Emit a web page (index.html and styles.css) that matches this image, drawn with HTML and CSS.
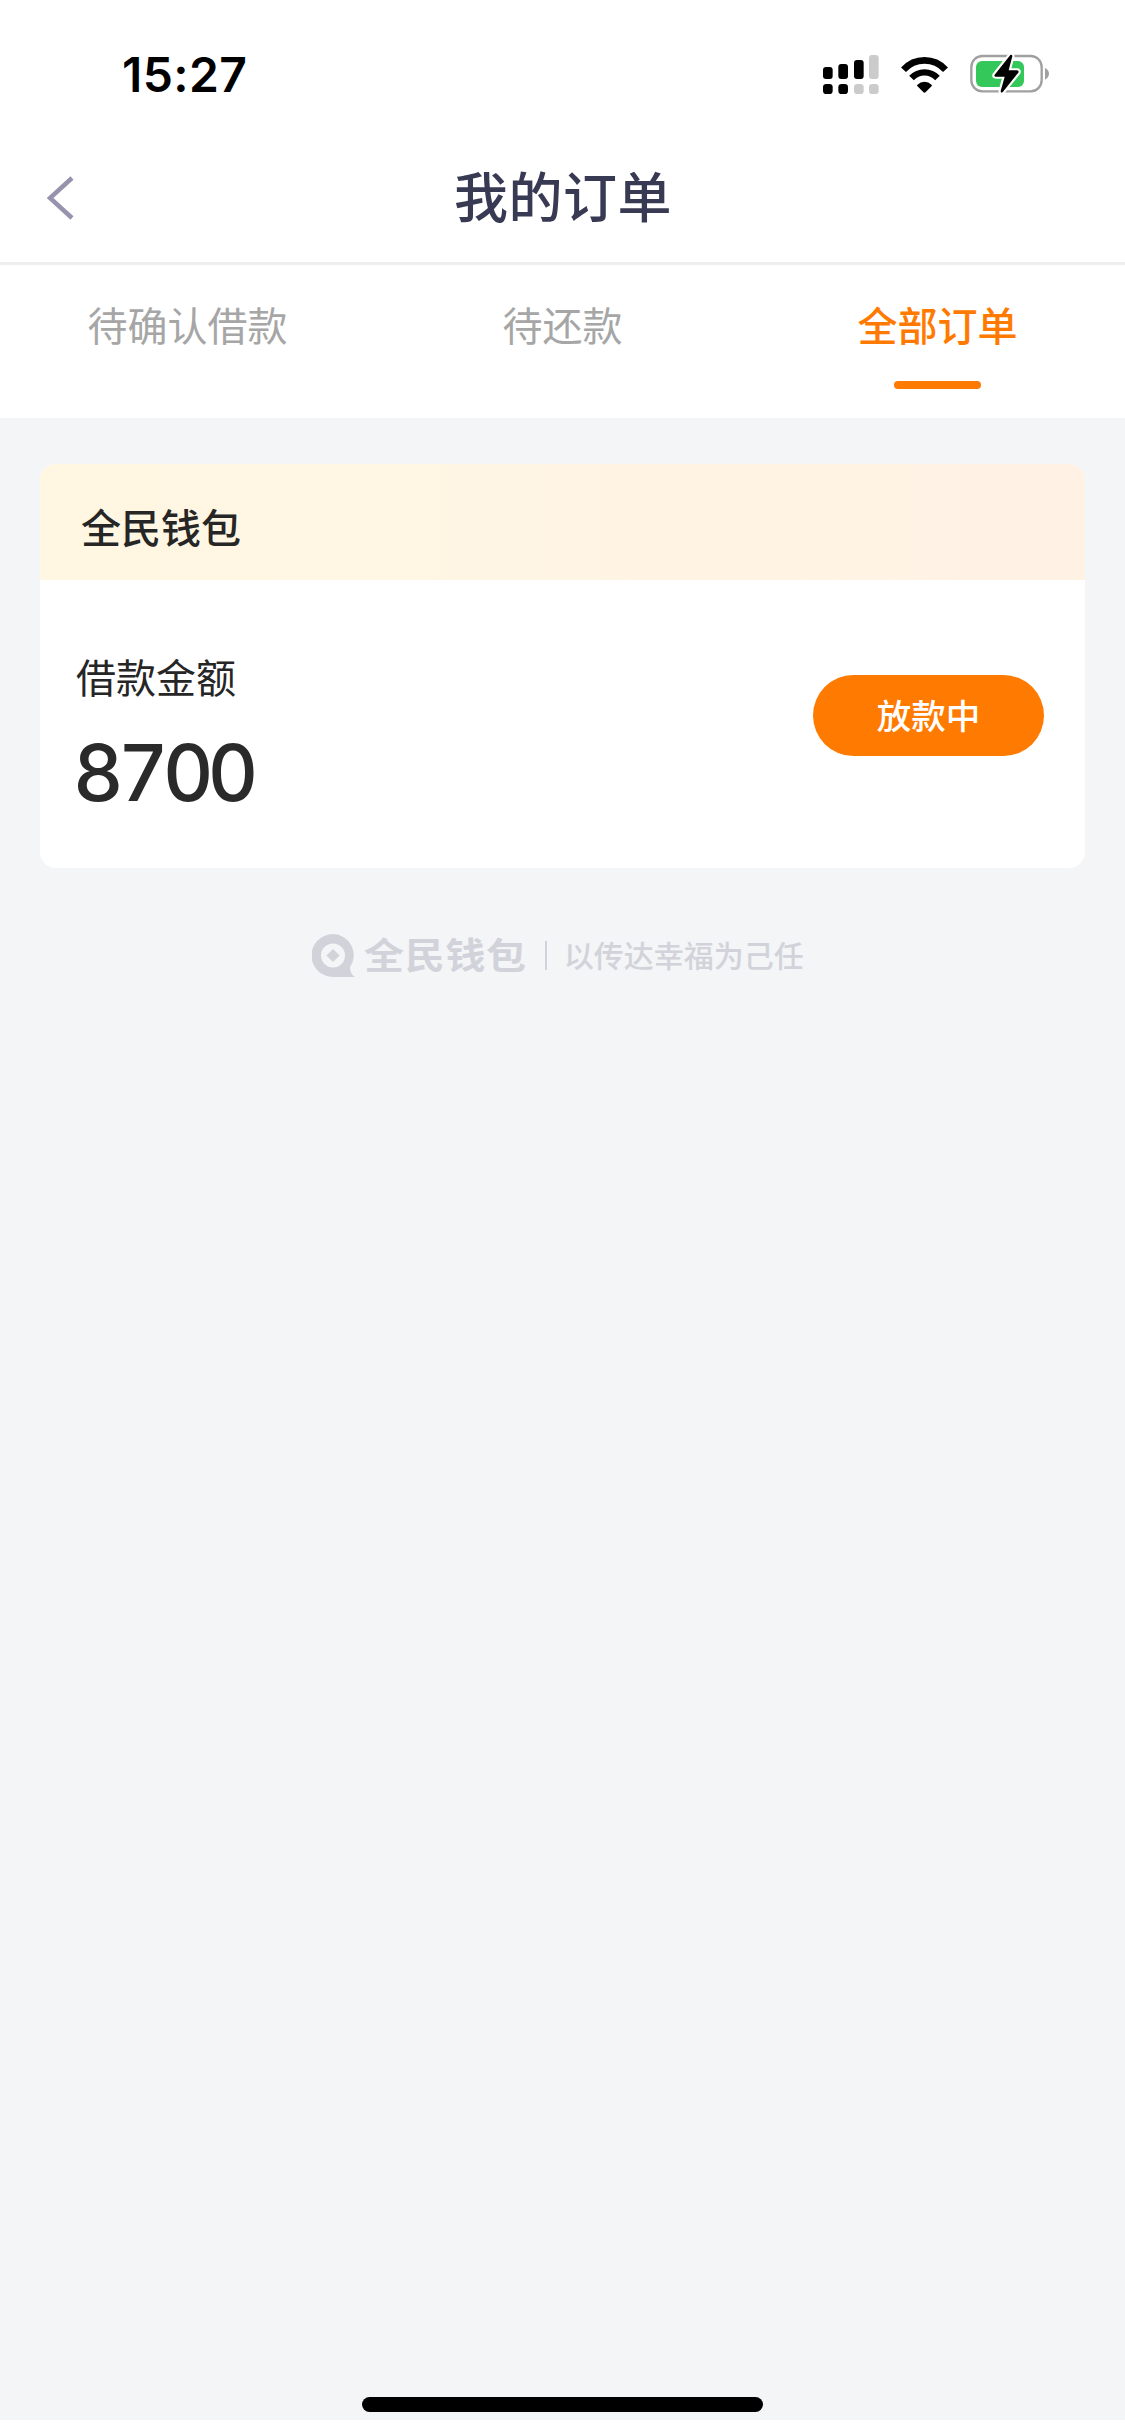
FILE: index.html
```html
<!DOCTYPE html>
<html lang="zh-CN">
<head>
    <meta charset="UTF-8">
    <meta name="viewport" content="width=device-width, initial-scale=1.0">
    <title>我的订单</title>
    <link rel="stylesheet" href="styles.css">
</head>
<body>
<div class="status-bar">
    <span class="time">15:27</span>
    <div class="status-icons">
        <svg class="signal" viewBox="0 0 168 117">
            <rect x="0" y="36" width="29" height="36" rx="9"/>
            <rect x="46" y="27" width="29" height="45" rx="9"/>
            <rect x="93" y="15" width="29" height="57" rx="9"/>
            <rect class="off" x="138" y="0" width="29" height="72" rx="9"/>
            <rect x="0" y="87" width="29" height="30" rx="10"/>
            <rect x="46" y="87" width="29" height="30" rx="10"/>
            <rect class="off" x="93" y="87" width="29" height="30" rx="10"/>
            <rect class="off" x="138" y="87" width="29" height="30" rx="10"/>
        </svg>
        <svg class="wifi" viewBox="0 0 146 108">
            <path d="M10 38Q36 10 73 10T136 38" fill="none" stroke="#000" stroke-width="20"/>
            <path d="M34 63Q50 46 73 46T112 63" fill="none" stroke="#000" stroke-width="19"/>
            <path d="M51 84Q61 74 73 74T95 84Q96 86 94 88L76 106Q73 108 70 106L52 88Q50 86 51 84Z"/>
        </svg>
        <svg class="battery" viewBox="0 0 240 120">
            <rect x="4" y="6" width="211" height="106" rx="33" fill="#fff" stroke="#a0a0a0" stroke-width="7"/>
            <rect x="18" y="21" width="144" height="78" rx="18" fill="#34c759"/>
            <path d="M225 42Q237 48 237 59T225 77Z" fill="#a0a0a0"/>
            <path d="M121 3L74 62Q71 68 78 68H104L92 111Q92 119 99 113L145 56Q148 50 141 49H116L127 7Q127 0 121 3Z" stroke="#fff" stroke-width="13" paint-order="stroke"/>
        </svg>
    </div>
</div>
<header>
    <svg class="back" viewBox="0 0 28 44">
        <path d="M25 2L3 22L25 42" fill="none" stroke="#9793ad" stroke-width="4.5"/>
    </svg>
    <h1>我的订单</h1>
</header>
<nav class="tabs">
    <div class="tab">待确认借款</div>
    <div class="tab">待还款</div>
    <div class="tab active">全部订单</div>
</nav>
<main>
    <div class="card">
        <div class="card-title">全民钱包</div>
        <div class="card-body">
            <div>
                <div class="label">借款金额</div>
                <div class="amount">8700</div>
            </div>
            <button class="button">放款中</button>
        </div>
    </div>
    <div class="brand">
        <svg class="brand-logo" viewBox="0 0 43 43">
            <path fill-rule="evenodd" d="M21 0A21 21 0 0 1 38 33Q38 40 43 43H21A21.500 21.500 0 0 1 21 0ZM21 9.500A12 12 0 1 0 21 33.500A12 12 0 1 0 21 9.500Z"/>
            <path d="M21 15.500L27 21.500L21 27.500L15 21.500Z" stroke="#d2d3da" stroke-width="1" stroke-linejoin="round"/>
        </svg>
        <span class="brand-name">全民钱包</span>
        <span class="brand-line"></span>
        <span class="slogan">以传达幸福为己任</span>
    </div>
    <div class="home-bar"></div>
</main>
</body>
</html>
```

FILE: styles.css
```css
* {
    box-sizing: border-box;
}
body {
    margin: 0;
    height: 2435px;
    background-color: #fff;
    font-family: "Noto Sans CJK SC", sans-serif;
    display: flex;
    flex-direction: column;
}
.status-bar {
    height: 132px;
    padding: 0 75px 0 122px;
    display: flex;
    justify-content: space-between;
}
.time {
    margin-top: 45px;
    font: 600 48px/60px Inter, sans-serif;
    letter-spacing: 0.4px;
    color: #000;
}
.status-icons {
    display: flex;
    align-items: flex-start;
}
.signal {
    width: 56px;
    height: 39px;
    margin-top: 55px;
}
.signal .off {
    fill: #cbcbcb;
}
.wifi {
    width: 49px;
    height: 36px;
    margin: 57px 0 0 21px;
}
.battery {
    width: 80px;
    height: 40px;
    margin: 54px 0 0 21px;
}
header {
    height: 133px;
    border-bottom: 3px solid #eee;
    display: flex;
    align-items: center;
    padding-left: 47px;
}
.back {
    width: 28px;
    height: 44px;
    margin-top: 2px;
}
h1 {
    flex-grow: 1;
    margin: 0 74px 5px 0;
    text-align: center;
    font-size: 54px;
    font-weight: 500;
    line-height: 80px;
    letter-spacing: 0.5px;
    color: #373a52;
}
.tabs {
    height: 153px;
    display: grid;
    grid-template-columns: repeat(3, 1fr);
}
.tab {
    display: flex;
    flex-direction: column;
    align-items: center;
    padding-top: 29px;
    font-size: 40px;
    line-height: 60px;
    color: #a6a6a6;
}
.tab.active {
    color: #ff7a00;
    font-weight: 500;
}
.tab.active::after {
    content: "";
    width: 87px;
    height: 8px;
    margin-top: 27px;
    border-radius: 4px;
    background-color: #ff7a00;
}
main {
    height: 2002px;
    padding: 46px 40px 0;
    background-color: #f3f5f7;
    display: flex;
    flex-direction: column;
    align-items: center;
}
.card {
    width: 100%;
    height: 404px;
    border-radius: 16px;
    background-color: #fff;
    overflow: hidden;
}
.card-title {
    height: 116px;
    padding: 32px 41px 0;
    font-size: 40px;
    font-weight: 500;
    line-height: 60px;
    color: #262626;
    background: linear-gradient(90deg, #fff7e2, #fff2e5);
}
.card-body {
    display: flex;
    justify-content: space-between;
    align-items: flex-start;
    padding: 66px 41px 0 36px;
}
.label {
    font-size: 40px;
    line-height: 60px;
    color: #262626;
}
.amount {
    margin: 22px 0 0 -3px;
    font: 500 78px/90px Inter, sans-serif;
    font-variant-numeric: tabular-nums;
    letter-spacing: -5.6px;
    color: #2a2a2a;
}
.button {
    width: 231px;
    height: 81px;
    margin-top: 29px;
    padding: 0 0 3px;
    border: none;
    border-radius: 41px;
    background-color: #ff7a00;
    color: white;
    font: 500 34.5px/50px "Noto Sans CJK SC", sans-serif;
}
.brand {
    height: 44px;
    width: 100%;
    margin-top: 65px;
    padding-left: 272px;
    display: flex;
    align-items: center;
    color: #d2d3da;
}
.brand-logo {
    width: 43px;
    height: 43px;
    fill: #d2d3da;
}
.brand-name {
    margin: 0 0 2px 9px;
    font-size: 40px;
    font-weight: 700;
    line-height: 44px;
    letter-spacing: 0.7px;
    transform: scaleY(0.9);
}
.brand-line {
    width: 2px;
    height: 29px;
    margin-left: 18px;
    background-color: #d2d3da;
}
.slogan {
    margin: 0 0 3px 17px;
    font-size: 30px;
    line-height: 44px;
    font-weight: 500;
}
.home-bar {
    width: 401px;
    height: 15px;
    margin: auto 0 8px;
    border-radius: 8px;
    background-color: #000;
}
```
